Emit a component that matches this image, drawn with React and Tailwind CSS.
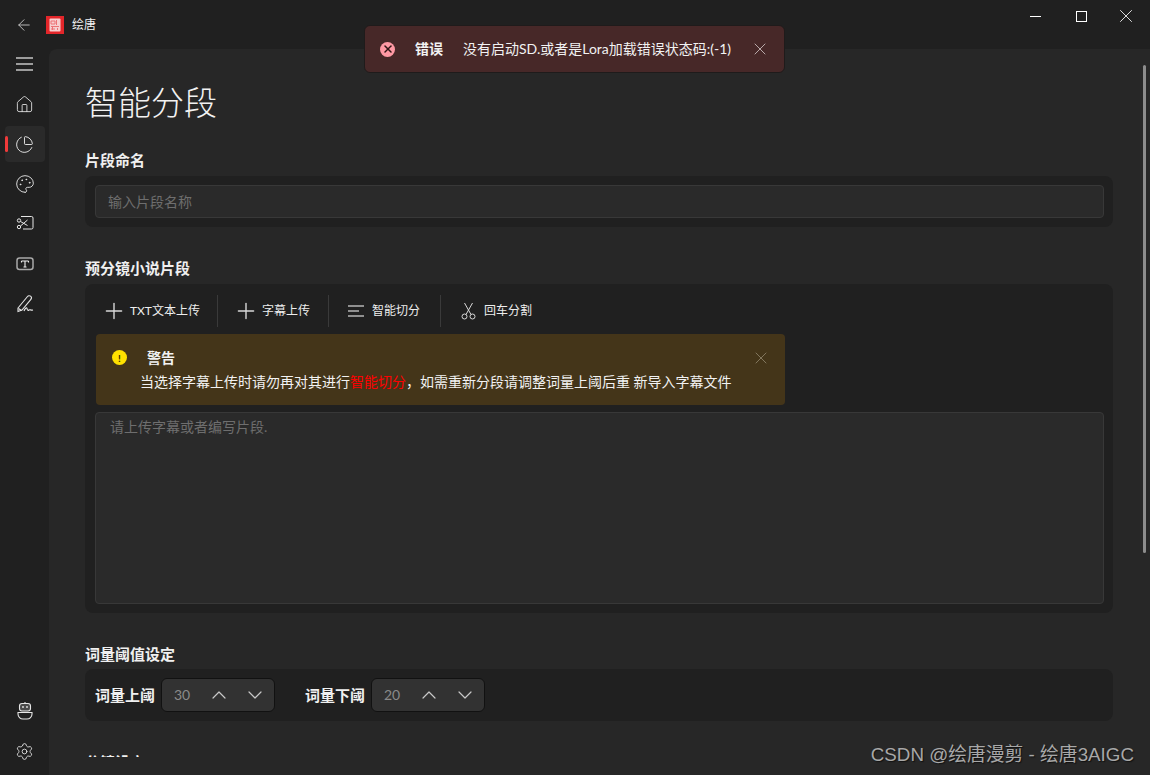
import React from 'react';
import { ArrowLeft, ChartPie, ChevronDown, ChevronUp, House, Palette, Plus, Settings, X } from 'lucide-react';

const font = { fontFamily: 'Lato, "Noto Sans CJK SC", sans-serif' };

const ScissorBox = () => (
  <svg width="18" height="18" viewBox="0 0 18 18" fill="none" stroke="currentColor" strokeWidth="1">
    <path d="M5 1.500 H15.500 a1.500 1.500 0 0 1 1.500 1.500 V12.500 a1.500 1.500 0 0 1-1.500 1.500 H7" />
    <circle cx="3" cy="5.500" r="1.700" />
    <circle cx="3" cy="12" r="1.700" />
    <path d="M4.500 6.500 L11.500 10.500 M4.500 11 L11.500 5" />
  </svg>
);

const TextBox = () => (
  <svg width="18" height="14" viewBox="0 0 18 14" fill="none">
    <rect x="1" y="1" width="16" height="11.500" rx="2.500" stroke="#a8a8a8" strokeWidth="1.500" />
    <path d="M5.500 4 H12.500 M9 4 V10 M7.500 10 H10.500 M5.500 4 V5.500 M12.500 4 V5.500" stroke="#f0f0f0" strokeWidth="1.100" />
  </svg>
);

const Signature = () => (
  <svg width="18" height="20" viewBox="0 0 18 20" fill="none" stroke="currentColor" strokeWidth="1.100">
    <path d="M2 14 L11.500 2.500 a2.200 2.200 0 0 1 3.400 2.800 L6 16 L2 17.500 Z" />
    <path d="M2.500 14.500 L5.500 16.500 M8 17 C9 14.500 10.500 13 11 14.500 C11.300 16 12 17 13 16 C13.800 15.200 15 16.500 17 16" />
  </svg>
);

const Robot = () => (
  <svg width="18" height="20" viewBox="0 0 18 20" fill="none" stroke="currentColor" strokeWidth="1.100">
    <path d="M9 1 V2.500" />
    <rect x="3.500" y="2.500" width="11" height="7.500" rx="2.500" fill="#4a4a4a" />
    <circle cx="7" cy="6" r="0.900" fill="currentColor" stroke="none" />
    <circle cx="11" cy="6" r="0.900" fill="currentColor" stroke="none" />
    <path d="M2 11.500 H16 V13 a5 5 0 0 1-5 5 H7 a5 5 0 0 1-5-5 Z" />
  </svg>
);

const Logo = () => (
  <svg width="18" height="18" viewBox="0 0 18 18">
    <rect width="18" height="18" fill="#e3262a" />
    <rect x="3.500" y="2.500" width="11" height="13" rx="1" fill="#f7cfd0" />
    <path d="M5 5 H9 V8 H5 Z M10.500 4 V9 M5 10.500 H13 M6.500 10.500 V14 M11.500 12 V14 M5 13 H9" stroke="#ec7376" strokeWidth="1" fill="none" />
  </svg>
);

const NavIcon = ({ children, active }) => (
  <div className={`relative flex h-9 w-10 items-center justify-center rounded pr-px text-[#e6e6e6] ${active ? 'bg-[#2a2a2a]' : ''}`}>
    {active && <span className="absolute left-0 top-[10px] h-4 w-[3px] rounded-full bg-[#f03a3a]" />}
    {children}
  </div>
);

const SectionTitle = ({ children }) => (
  <h2 className="text-[15px] leading-5 font-bold text-[#f0f0f0]">{children}</h2>
);

const ToolButton = ({ icon, label, last }) => (
  <div className={`flex h-8 items-center ${last ? '' : 'border-r border-[#3a3a3a]'}`}>
    <span className="flex w-[18px] items-center justify-center text-[#d8d8d8]">{icon}</span>
    <span className="ml-[7px] text-xs text-[#eeeeee]">{label}</span>
  </div>
);

const PlusIcon = () => <Plus size={26} strokeWidth={1.300} className="shrink-0" />;

const NumberBox = ({ label, value }) => (
  <div className="flex items-center">
    <span className="w-[66px] text-[15px] font-bold text-[#f0f0f0]">{label}</span>
    <div className="flex h-[34px] w-[114px] items-center rounded-md border border-[#111111] bg-[#323232] text-[#c8c8c8]">
      <span className="ml-3 w-[33px] text-sm text-[#8a8a8a]">{value}</span>
      <ChevronUp size={24} strokeWidth={1.200} className="shrink-0" />
      <span className="w-3" />
      <ChevronDown size={24} strokeWidth={1.200} className="shrink-0" />
    </div>
  </div>
);

export default function App() {
  return (
    <div className="relative flex h-[775px] w-[1150px] flex-col overflow-hidden bg-[#202020]" style={font}>
      {/* title bar */}
      <div className="flex h-[49px] items-center">
        <ArrowLeft size={18} strokeWidth={1.200} className="ml-[15px] text-[#c8c8c8]" />
        <span className="ml-[13px] flex"><Logo /></span>
        <span className="ml-2 text-xs text-[#f2f2f2]">绘唐</span>
        <div className="ml-auto mt-[-17px] flex items-center text-[#f0f0f0]">
          <span className="h-px w-[11px] bg-white" />
          <span className="ml-[35px] h-[11px] w-[11px] border border-white" />
          <X size={22} strokeWidth={1} className="ml-[28px] mr-[13px]" />
        </div>
      </div>

      <div className="flex min-h-0 flex-1">
        {/* sidebar */}
        <aside className="flex w-[49px] flex-col pl-[5px] pb-[6px]">
          <div className="mt-[-3px] flex flex-col gap-1">
            <NavIcon>
              <span className="flex flex-col gap-1">
                <i className="h-0.5 w-[17px] bg-[#9c9c9c]" />
                <i className="h-0.5 w-[17px] bg-[#9c9c9c]" />
                <i className="h-0.5 w-[17px] bg-[#9c9c9c]" />
              </span>
            </NavIcon>
            <NavIcon><House size={19} strokeWidth={1.100} /></NavIcon>
            <NavIcon active><ChartPie size={19} strokeWidth={1.200} /></NavIcon>
            <NavIcon><Palette size={20} strokeWidth={1.100} /></NavIcon>
            <NavIcon><ScissorBox /></NavIcon>
            <NavIcon><TextBox /></NavIcon>
            <NavIcon><Signature /></NavIcon>
          </div>
          <div className="mt-auto flex flex-col gap-[4px]">
            <NavIcon><Robot /></NavIcon>
            <NavIcon><Settings size={19} strokeWidth={1.100} /></NavIcon>
          </div>
        </aside>

        {/* main */}
        <main className="min-w-0 flex-1 rounded-tl-lg bg-[#272727] pl-9 pr-[37px]">
          <div className="h-[708px] overflow-hidden">
            <h1 className="mt-[28px] text-[33px] leading-[50px] font-light text-[#f2f2f2]">智能分段</h1>

            <div className="mt-[23px]"><SectionTitle>片段命名</SectionTitle></div>
            <section className="mt-[6px] h-[51px] rounded-lg bg-[#202020] pl-[10px] pr-[9px] pt-[9px]">
              <div className="flex h-[33px] items-center rounded border border-[#383838] bg-[#2a2a2a] pl-3 text-sm text-[#6e6e6e]">输入片段名称</div>
            </section>

            <div className="mt-[31px]"><SectionTitle>预分镜小说片段</SectionTitle></div>
            <section className="mt-[6px] h-[329px] rounded-lg bg-[#202020] pl-[10px] pr-[9px] pt-[11px]">
              <div className="flex h-8 items-center pl-[10px]">
                <div className="w-[113px]"><ToolButton icon={<PlusIcon />} label="TXT文本上传" /></div>
                <div className="ml-[19px] w-[92px]"><ToolButton icon={<PlusIcon />} label="字幕上传" /></div>
                <div className="ml-[18px] w-[94px]">
                  <ToolButton
                    icon={
                      <span className="flex w-4 flex-col gap-[3px]">
                        <i className="h-0.5 w-4 bg-[#8f8f8f]" />
                        <i className="h-0.5 w-[11px] bg-[#8f8f8f]" />
                        <i className="h-0.5 w-4 bg-[#8f8f8f]" />
                      </span>
                    }
                    label="智能切分"
                  />
                </div>
                <div className="ml-[18px]">
                  <ToolButton
                    last
                    icon={
                      <svg width="15" height="18" viewBox="0 0 15 18" fill="none" stroke="currentColor" strokeWidth="1">
                        <circle cx="3.500" cy="14.500" r="2.500" />
                        <circle cx="11.500" cy="14.500" r="2.500" />
                        <path d="M5 12.500 L11.500 1 M10 12.500 L3.500 1" />
                      </svg>
                    }
                    label="回车分割"
                  />
                </div>
              </div>
              <div className="relative ml-px mt-[7px] h-[71px] w-[689px] rounded bg-[#443519] text-sm text-[#f2f2f2]">
                <span className="absolute left-4 top-[16px] flex h-[15px] w-[15px] items-center justify-center rounded-full bg-[#ffe100] text-[10px] leading-none font-bold text-[#332a00]">!</span>
                <b className="absolute left-[51px] top-[15px] leading-[18px]">警告</b>
                <p className="absolute left-[44px] top-[39px] leading-[18px] whitespace-nowrap">当选择字幕上传时请勿再对其进行<span className="text-[#ff0000]">智能切分</span>，如需重新分段请调整词量上阈后重 新导入字幕文件</p>
                <X size={20} strokeWidth={1} className="absolute right-[14px] top-[14px] text-[#8f846c]" />
              </div>
              <div className="mt-[7px] h-[192px] w-full rounded border border-[#383838] bg-[#2a2a2a] pl-[14px] pt-[5px] text-sm leading-[18px] text-[#6e6e6e]">请上传字幕或者编写片段.</div>
            </section>

            <div className="mt-[31px]"><SectionTitle>词量阈值设定</SectionTitle></div>
            <section className="mt-[5px] flex h-[52px] items-center gap-[30px] rounded-lg bg-[#202020] pl-[10px]">
              <NumberBox label="词量上阈" value="30" />
              <NumberBox label="词量下阈" value="20" />
            </section>

            <div className="mt-[31px]"><SectionTitle>分镜设定</SectionTitle></div>
          </div>
        </main>
      </div>

      {/* scrollbar */}
      <span className="absolute left-[1143px] top-[65px] h-[488px] w-[3px] rounded-full bg-[#8c8c8c]" />

      {/* error toast */}
      <div className="absolute left-[364px] top-[25px] flex h-[48px] w-[421px] items-center rounded-md border border-[#1f1b1b] bg-[#472828] text-sm text-[#f2f2f2]">
        <span className="ml-[15px] flex h-[15px] w-[15px] items-center justify-center rounded-full bg-[#ff99a4] text-[#301414]"><X size={12} strokeWidth={3} /></span>
        <b className="ml-[20px]">错误</b>
        <span className="ml-[20px] whitespace-nowrap">没有启动SD.或者是Lora加载错误状态码:(-1)</span>
        <X size={20} strokeWidth={1} className="absolute right-[14px] top-[13px] text-[#cfc4c4]" />
      </div>

      {/* watermark */}
      <span className="absolute bottom-[8px] right-[16px] text-[18.800px] leading-6 text-[#a8a8a8] [text-shadow:1px_1px_1px_#111111]" style={{ fontFamily: '"Liberation Sans", "Noto Sans CJK SC", sans-serif' }}>CSDN @绘唐漫剪 - 绘唐3AIGC</span>
    </div>
  );
}
